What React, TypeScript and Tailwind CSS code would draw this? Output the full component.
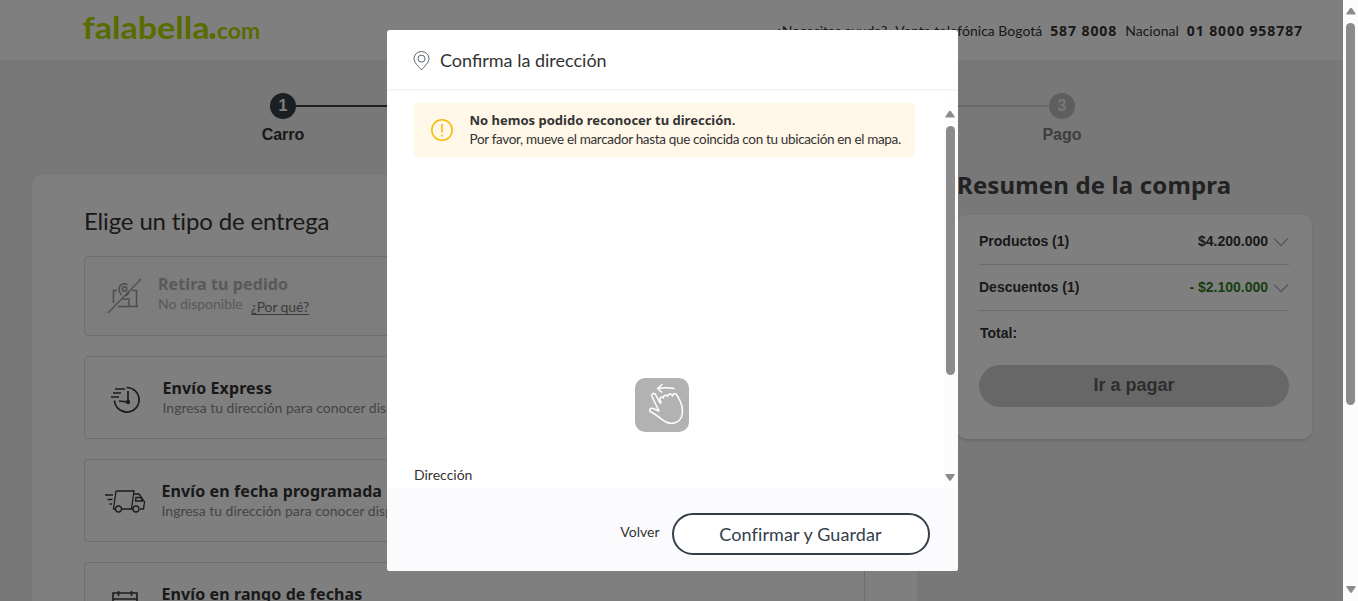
import type { ReactNode } from "react";

const LATO = "font-['Lato',sans-serif]";
const ARIAL = "font-['Liberation_Sans',sans-serif]";
const NOTO = "font-['Noto_Sans',sans-serif]";

function Logo() {
  return (
    <svg className="h-8 w-[180px] overflow-visible" viewBox="0 0 180 32" fill="#b0d900">
      <text x="0.500" y="26" fontFamily="Lato, sans-serif" fontWeight="700" fontSize="30" textLength="127" lengthAdjust="spacingAndGlyphs">
        falabella
      </text>
      <circle cx="130.500" cy="23" r="2.900" />
      <text x="135" y="26" fontFamily="Lato, sans-serif" fontWeight="700" fontSize="23" textLength="43" lengthAdjust="spacingAndGlyphs">
        com
      </text>
    </svg>
  );
}

function PickupIcon() {
  return (
    <svg className="h-[36px] w-[36px] shrink-0" viewBox="0 0 36 36" fill="none" stroke="#9a9a9a" strokeWidth="1.5">
      <path d="M1 35 34 1" strokeWidth="1.2" />
      <path d="M10 12.500H6.500V25M25 12.500h4.500V28.500M11 28.500H31M16 28.500h6V21H15.500" />
      <path d="M14.500 17c-1.600-2-2.500-4.200-2.500-5.700a5.400 5.400 0 0 1 8.500-4.500M19 18c1.500-1.500 2.500-2.500 3-4" />
      <circle cx="17.500" cy="11" r="2.200" />
    </svg>
  );
}

function ExpressIcon() {
  return (
    <svg className="h-[28px] w-[32px] shrink-0" viewBox="0 0 32 28" fill="none" stroke="#383838" strokeWidth="1.700">
      <path d="M16.500 1.500A12.300 12.300 0 1 1 4.500 14.500" />
      <path d="M5 3H15M3 7H11M1 11H9" />
      <path d="M18 5v11L9 15" />
      <circle cx="18" cy="16" r="1.300" fill="#383838" />
    </svg>
  );
}

function TruckIcon() {
  return (
    <svg className="h-[26px] w-[42px] shrink-0" viewBox="0 0 42 26" fill="none" stroke="#383838" strokeWidth="1.300">
      <path d="M12 3H30L27.500 21H17.500M11 21H9.500L12 3M29.500 6H35L39 11.500 40.500 14 39.500 21H36M29 21h-2" />
      <path d="M32 9.500h4.500l2 3.500H31.500z" />
      <path d="M1 7H9M3.500 11.500H8.500M5.500 16H8" />
      <circle cx="14.500" cy="21" r="3" />
      <circle cx="32" cy="21" r="3" />
    </svg>
  );
}

function CalendarIcon() {
  return (
    <svg className="h-[28px] w-[28px] shrink-0" viewBox="0 0 28 28" fill="none" stroke="#383838" strokeWidth="1.600">
      <path d="M2 3H26V26H2zM2 9H26M7.500 1V6M20.500 1V6" />
    </svg>
  );
}

function Chevron() {
  return (
    <svg className="ml-[5px] h-[10px] w-4" viewBox="0 0 16 10" fill="none" stroke="#a8adb8" strokeWidth="1.300">
      <path d="M1 1.500 8 8.500 15 1.500" />
    </svg>
  );
}

function Arrow({ down = false }: { down?: boolean }) {
  return (
    <svg className="h-2 w-[10px] shrink-0" viewBox="0 0 10 8" fill="#8b8b8b">
      <path d={down ? "M1 0h8q1 0 .6 1L6 6.300q-1 1-2 0L.4 1Q0 0 1 0z" : "M1 7.500h8q1 0 .6-1L6 1.200q-1-1-2 0L.4 6.500q-.4 1 .6 1z"} />
    </svg>
  );
}

function Option({ icon, title, children, className, textClass }: { icon: ReactNode; title: string; children?: ReactNode; className: string; textClass: string }) {
  return (
    <div className={`flex rounded border border-[#dcdcdc] ${className}`}>
      {icon}
      <div className={`flex flex-col whitespace-nowrap ${textClass}`}>
        <h3 className={`text-[16px] leading-6 font-bold tracking-[0.1px] ${NOTO}`}>{title}</h3>
        {children}
      </div>
    </div>
  );
}

function Row({ label, value, green = false }: { label: string; value: string; green?: boolean }) {
  return (
    <div className="flex h-[46px] items-center border-b border-[#d5d5d5] text-[14px] font-bold">
      <span className="flex-1">{label}</span>
      <span className={green ? "text-[#2f7d1f]" : ""}>{value}</span>
      <Chevron />
    </div>
  );
}

function Page() {
  return (
    <div className={`flex h-[601px] w-[1343px] flex-col overflow-hidden bg-[#f0f0f0] text-[#333] ${LATO}`}>
      <header className="flex h-[60px] shrink-0 justify-between bg-white pr-[40px] pl-[82px]">
        <div className="pt-[13px]"><Logo /></div>
        <div className="flex items-center gap-2 text-[14px] whitespace-nowrap">
          <span>¿Necesitas ayuda?</span>
          <span>Venta telefónica Bogotá</span>
          <b className={`text-[14px] tracking-[0.92px] ${NOTO}`}>587 8008</b>
          <span>Nacional</span>
          <b className={`text-[14px] tracking-[0.92px] ${NOTO}`}>01 8000 958787</b>
        </div>
      </header>

      <div className={`flex h-[115px] shrink-0 justify-center pt-[33px] pl-[2px] text-[16px] font-bold ${ARIAL}`}>
        <div className="flex w-[843px] items-start">
          <div className="flex w-16 flex-col items-center">
            <span className="flex size-[26px] items-center justify-center rounded-full bg-[#343e49] text-white">1</span>
            <span className="mt-[4px]">Carro</span>
          </div>
          <div className="-ml-[19px] mt-3 h-[2px] w-[377px] bg-[#343e49]" />
          <div className="mt-3 h-[2px] w-[376px] bg-[#d2d2d2]" />
          <div className="-ml-[19px] flex w-16 flex-col items-center text-[#7c7c7c]">
            <span className="flex size-[26px] items-center justify-center rounded-full bg-[#bcbcbc] text-[#f0f0f0]">3</span>
            <span className="mt-[4px]">Pago</span>
          </div>
        </div>
      </div>

      <div className="flex flex-1 gap-10 pl-8">
        <main className="h-[500px] w-[885px] shrink-0 rounded-[10px] bg-white px-[52px] pt-[28px]">
          <h2 className="text-[24px] leading-9 tracking-[-0.15px]">Elige un tipo de entrega</h2>
          <div className="mt-[17px] flex w-[781px] flex-col gap-5">
            <Option
              className="h-20 bg-[#fafafa] pt-[21px] pl-[22px] text-[#b3b3b3]"
              icon={<PickupIcon />}
              title="Retira tu pedido"
              textClass="-mt-[6px] ml-[15px]"
            >
              <div className="-mt-px flex gap-2 text-[14px] leading-[18px]">
                <span>No disponible</span>
                <span className="mt-[3px] h-[17px] border-b border-[#777] leading-[17px] tracking-[-0.1px] text-[#777]">¿Por qué?</span>
              </div>
            </Option>
            <Option
              className="h-[83px] pt-[29px] pl-[25px]"
              icon={<ExpressIcon />}
              title="Envío Express"
              textClass="-mt-[10px] ml-[20.5px]"
            >
              <p className="-mt-[2px] text-[14px] leading-[20px] text-[#8a8a8a]">Ingresa tu dirección para conocer disponibilidad</p>
            </Option>
            <Option
              className="h-[83px] pt-[28px] pl-[19px]"
              icon={<TruckIcon />}
              title="Envío en fecha programada"
              textClass="-mt-[9px] ml-[15.5px]"
            >
              <p className="-mt-[2px] text-[14px] leading-[20px] text-[#8a8a8a]">Ingresa tu dirección para conocer disponibilidad</p>
            </Option>
            <Option
              className="h-[83px] pt-[27px] pl-[26px]"
              icon={<CalendarIcon />}
              title="Envío en rango de fechas"
              textClass="-mt-[8px] ml-[22.5px]"
            />
          </div>
        </main>

        <aside className="w-[355px]">
          <h2 className={`-mt-[8px] text-[24px] leading-9 font-bold tracking-[0.14px] whitespace-nowrap text-[#444] ${NOTO}`}>Resumen de la compra</h2>
          <section className={`mt-3 h-[224px] rounded-[10px] bg-white pr-[23px] pl-[22px] pt-1 shadow-[0_2px_3px_rgba(0,0,0,0.12)] ${ARIAL}`}>
            <Row label="Productos (1)" value="$4.200.000" />
            <Row label="Descuentos (1)" value="- $2.100.000" green />
            <div className="flex h-[46px] items-center pb-px pl-px text-[14px] font-bold">Total:</div>
            <button className="mt-2 flex h-[42px] w-[310px] items-center justify-center rounded-full bg-[#cfcfcf] pb-[2px] text-[18px] font-bold text-[#5c5c5c]">Ir a pagar</button>
          </section>
        </aside>
      </div>
    </div>
  );
}

function Modal() {
  return (
    <section className={`mt-[30px] ml-[386.5px] flex h-[541px] w-[571px] flex-col overflow-hidden rounded-[3px] bg-white text-[#333] ${LATO}`}>
      <header className="flex h-[61px] shrink-0 items-center gap-[10px] border-b-2 border-[#f5f5f5] pt-[2px] pl-[26.500px]">
        <svg className="h-[20px] w-[17px]" viewBox="0 0 17 20" fill="none" stroke="#59636d" strokeWidth="1">
          <path d="M8.500 19C6 16 1 11.500 1 7.500a7.500 7 0 0 1 15 0C16 11.500 11 16 8.500 19z" />
          <circle cx="8.500" cy="7.700" r="3.500" />
        </svg>
        <h2 className="text-[18px]">Confirma la dirección</h2>
      </header>
      <div className="flex flex-1 pt-3">
        <div className="ml-[27.5px] flex w-[501px] flex-col">
          <div className="flex h-[54px] items-center rounded bg-[#fff8e8] pl-[17px]">
            <svg className="size-[22px] shrink-0" viewBox="0 0 22 22" fill="none" stroke="#f9b800" strokeWidth="1.500">
              <circle cx="11" cy="11" r="10.200" />
              <path d="M11 5v8.500M11 15.500v2" />
            </svg>
            <div className="ml-[16.5px] whitespace-nowrap">
              <p className={`text-[13px] leading-[19px] font-bold ${NOTO}`}>No hemos podido reconocer tu dirección.</p>
              <p className="text-[13.5px] leading-[19px] tracking-[-0.33px]">Por favor, mueve el marcador hasta que coincida con tu ubicación en el mapa.</p>
            </div>
          </div>
          <div className="flex h-[275px] items-end justify-center pr-[6px]">
            <svg className="size-[54px]" viewBox="0 0 54 54" fill="none" stroke="white" strokeWidth="1.500" strokeLinecap="round" strokeLinejoin="round">
              <rect width="54" height="54" rx="10" fill="#b2b2b2" stroke="none" />
              <path d="M39 10.500Q31 9 23 10.500M27 6.500l-4.500 4 4 3.500" />
              <path d="M25 25 20.500 16.500c-1.500-2.500-4.500-.5-3.500 2L24 33l-6-2.500c-3-1-4.500 2-2 3.500 5 2.500 9.500 6.500 14 9.500 7 4 14 1 16.500-4.500 2.500-8-.5-16-5-22.500-1.500-1.500-3.500-1-4 1.500-1-2.500-4-3-5 .5-1-2-4.500-1.500-4 1.500-2-2-4.500-.5-3.500 2l1 3" />
            </svg>
          </div>
          <p className="mt-[33px] text-[14px] leading-5">Dirección</p>
        </div>
        <div className="ml-auto flex w-[14px] flex-col items-center bg-[#fcfcfc] pt-[7px] pb-[6px] pr-[1px]">
          <Arrow />
          <div className="mt-[8px] h-[249px] w-[9px] rounded-full bg-[#8b8b8b]" />
          <div className="mt-auto flex"><Arrow down /></div>
        </div>
      </div>
      <footer className="flex h-[83px] shrink-0 items-center justify-end gap-[12px] bg-[#fbfbfd] pt-[8px] pr-[28px] text-[#343e49]">
        <button className="pb-[4px] text-[14px] text-[#333]">Volver</button>
        <button className="h-[42px] w-[258px] rounded-full border-2 border-[#343e49] bg-white pt-[2px] text-[18px] tracking-[0.1px]">Confirmar y Guardar</button>
      </footer>
    </section>
  );
}

export default function App() {
  return (
    <div className="relative flex h-[601px] w-[1358px] overflow-hidden">
      <Page />
      <div className="flex w-[15px] flex-col items-center bg-[#fcfcfc] pt-[7px] pb-[7px]">
        <Arrow />
        <div className="mt-[8px] h-[382px] w-[9px] rounded-full bg-[#8b8b8b]" />
        <div className="mt-auto flex"><Arrow down /></div>
      </div>
      <div className="absolute inset-y-0 left-0 w-[1343px] bg-black/50">
        <Modal />
      </div>
    </div>
  );
}
